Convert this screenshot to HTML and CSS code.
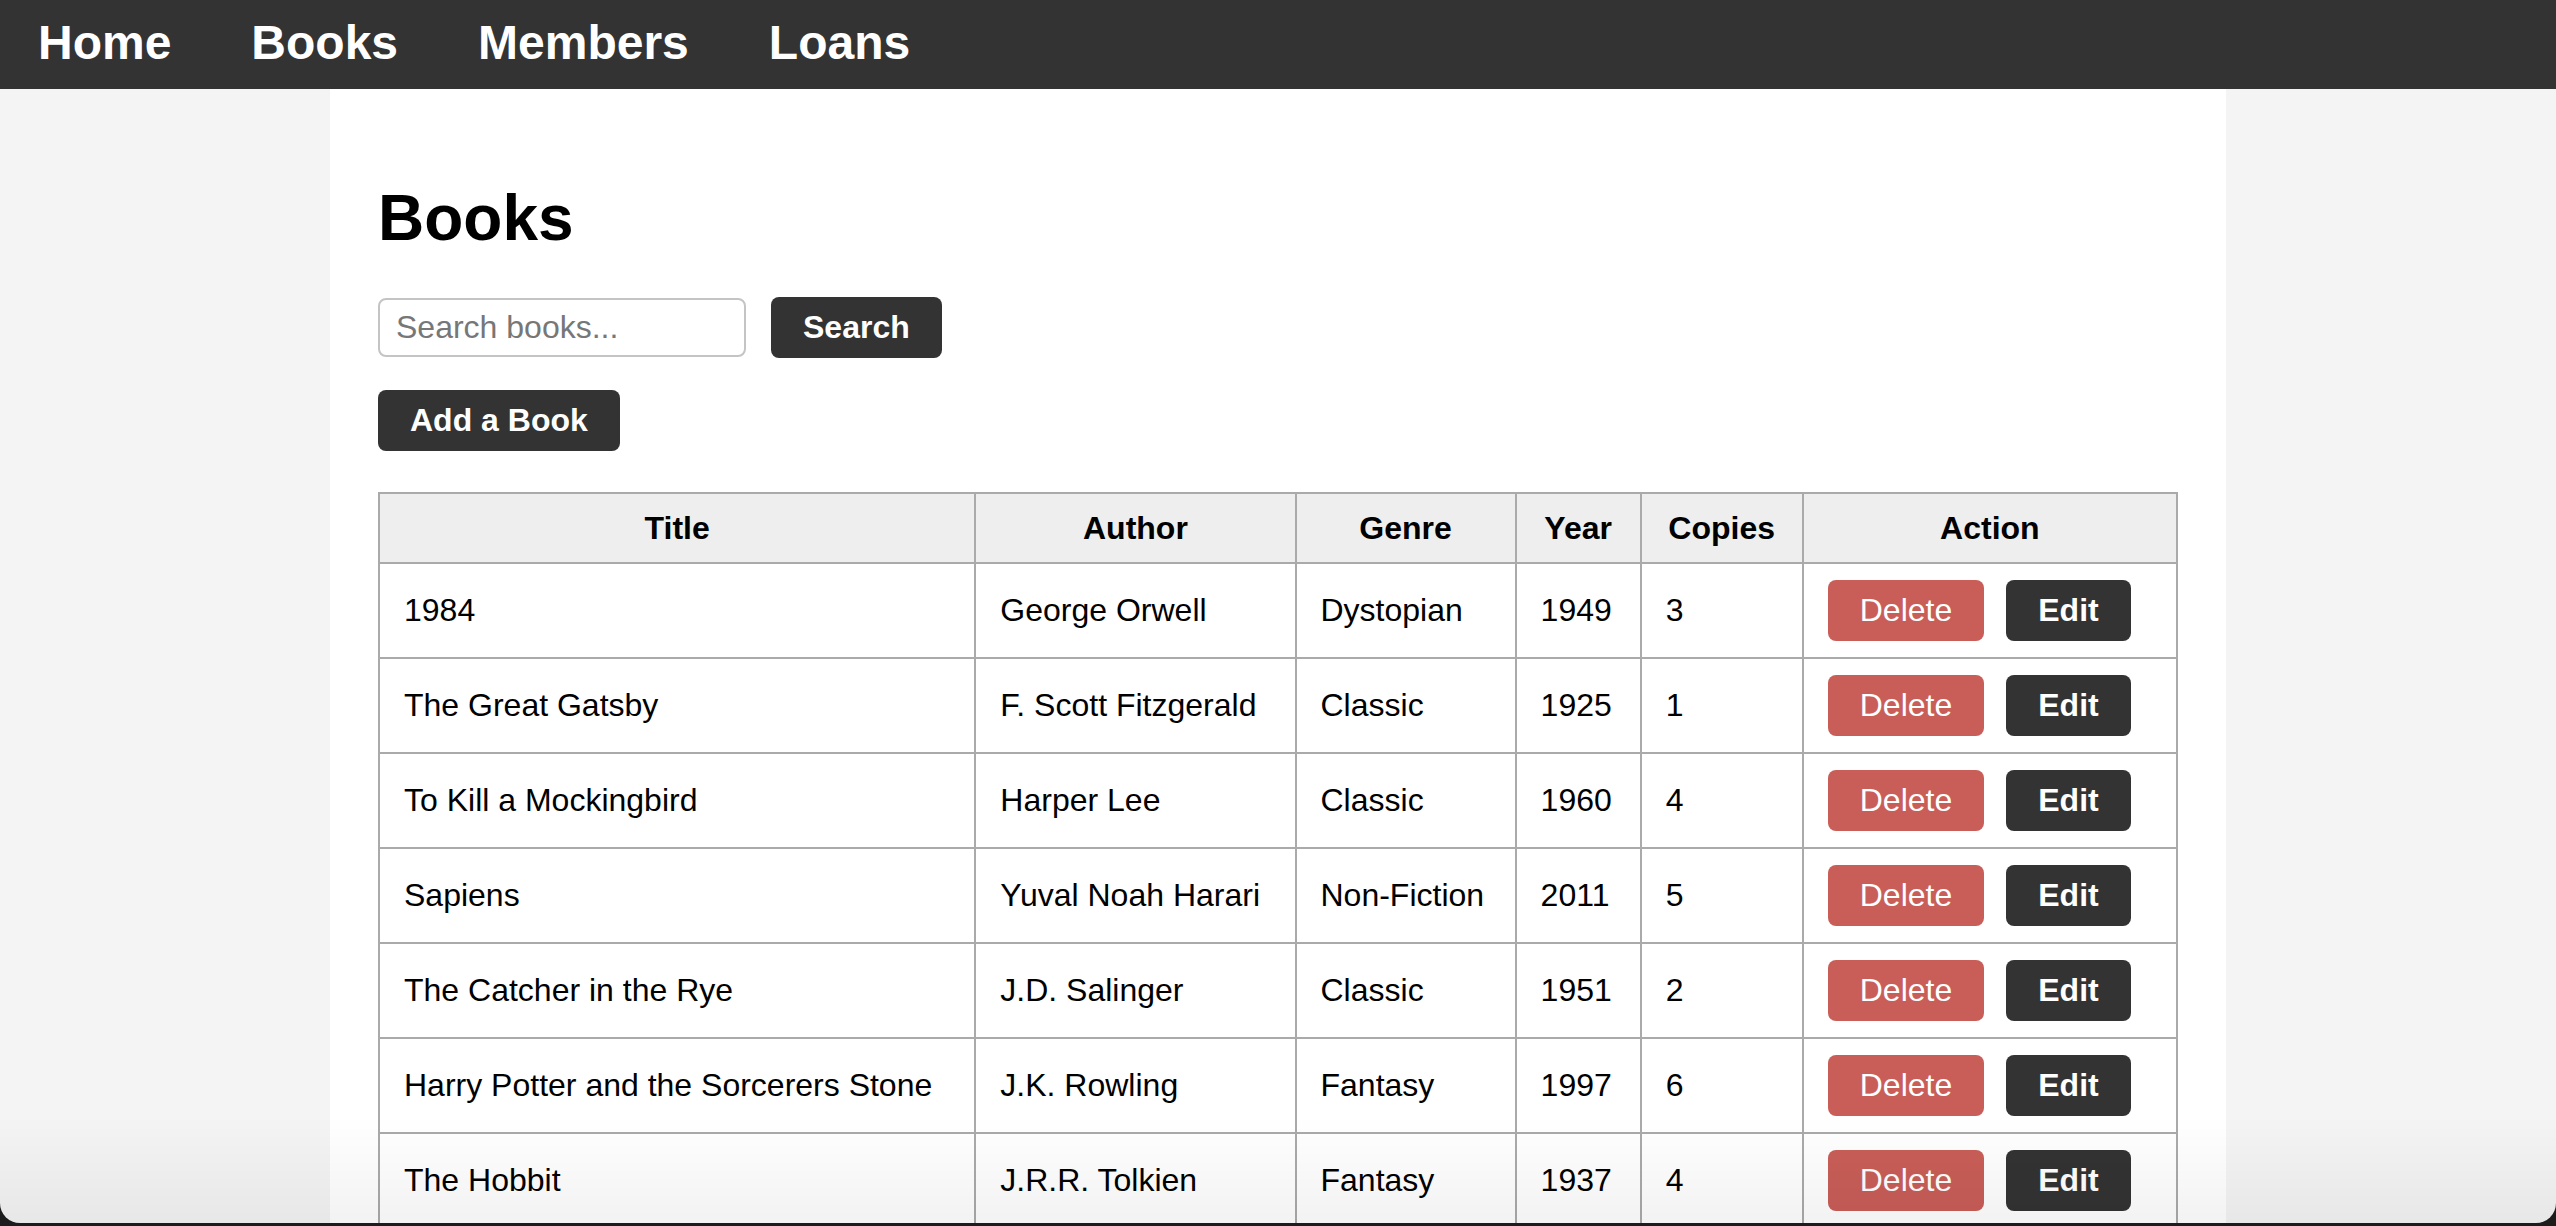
FILE: index.html
```html
<!DOCTYPE html>
<html lang="en">
<head>
<meta charset="utf-8">
<title>Books</title>
<link rel="stylesheet" href="styles.css">
</head>
<body>
<nav class="topnav">
  <a href="#">Home</a>
  <a href="#">Books</a>
  <a href="#">Members</a>
  <a href="#">Loans</a>
</nav>
<main class="container">
  <h1 class="title">Books</h1>
  <form class="search-row">
    <input class="search-input" type="text" placeholder="Search books...">
    <button class="btn" type="button">Search</button>
  </form>
  <div class="add-row"><button class="btn" type="button">Add a Book</button></div>
  <table class="books">
    <colgroup>
      <col class="c-title"><col class="c-author"><col class="c-genre"><col class="c-year"><col class="c-copies"><col class="c-action">
    </colgroup>
    <thead>
      <tr><th>Title</th><th>Author</th><th>Genre</th><th>Year</th><th>Copies</th><th>Action</th></tr>
    </thead>
    <tbody>
      <tr><td>1984</td><td>George Orwell</td><td>Dystopian</td><td>1949</td><td>3</td><td><button class="btn btn-delete" type="button">Delete</button><button class="btn btn-edit" type="button">Edit</button></td></tr>
      <tr><td>The Great Gatsby</td><td>F. Scott Fitzgerald</td><td>Classic</td><td>1925</td><td>1</td><td><button class="btn btn-delete" type="button">Delete</button><button class="btn btn-edit" type="button">Edit</button></td></tr>
      <tr><td>To Kill a Mockingbird</td><td>Harper Lee</td><td>Classic</td><td>1960</td><td>4</td><td><button class="btn btn-delete" type="button">Delete</button><button class="btn btn-edit" type="button">Edit</button></td></tr>
      <tr><td>Sapiens</td><td>Yuval Noah Harari</td><td>Non-Fiction</td><td>2011</td><td>5</td><td><button class="btn btn-delete" type="button">Delete</button><button class="btn btn-edit" type="button">Edit</button></td></tr>
      <tr><td>The Catcher in the Rye</td><td>J.D. Salinger</td><td>Classic</td><td>1951</td><td>2</td><td><button class="btn btn-delete" type="button">Delete</button><button class="btn btn-edit" type="button">Edit</button></td></tr>
      <tr><td>Harry Potter and the Sorcerers Stone</td><td>J.K. Rowling</td><td>Fantasy</td><td>1997</td><td>6</td><td><button class="btn btn-delete" type="button">Delete</button><button class="btn btn-edit" type="button">Edit</button></td></tr>
      <tr><td>The Hobbit</td><td>J.R.R. Tolkien</td><td>Fantasy</td><td>1937</td><td>4</td><td><button class="btn btn-delete" type="button">Delete</button><button class="btn btn-edit" type="button">Edit</button></td></tr>
    </tbody>
  </table>
</main>
<div class="window-edge" aria-hidden="true"><div class="window-edge-inner"></div></div>
</body>
</html>
```
FILE: styles.css
```css
html, body {
  margin: 0;
  padding: 0;
}
body {
  background: #f4f4f4;
  font-family: "Liberation Sans", Arial, Helvetica, sans-serif;
  color: #000;
}
.topnav {
  display: flex;
  align-items: flex-start;
  gap: 80px;
  height: 89px;
  box-sizing: border-box;
  padding: 15px 0 0 38px;
  background: #333;
}
.topnav a {
  color: #fff;
  text-decoration: none;
  font-weight: bold;
  font-size: 48px;
  line-height: 55px;
}
.container {
  width: 1896px;
  box-sizing: border-box;
  margin: 0 auto;
  padding: 48px 48px 40px;
  background: #fff;
}
.title {
  margin: 44px 0 42px;
  font-size: 64px;
  line-height: 74px;
  font-weight: bold;
}
.search-row {
  display: flex;
  align-items: center;
  gap: 25px;
  margin: 0;
}
.search-input {
  width: 368px;
  height: 59px;
  box-sizing: border-box;
  border: 2px solid #c4c4c4;
  border-radius: 8px;
  padding: 0 16px;
  font-family: "Liberation Sans", Arial, sans-serif;
  font-size: 32px;
  color: #000;
  outline: none;
}
.search-input::placeholder {
  color: #777;
}
.add-row {
  display: flex;
  margin-top: 32px;
}
.btn {
  background: #333;
  color: #fff;
  border: none;
  border-radius: 8px;
  padding: 12px 32px;
  font-family: "Liberation Sans", Arial, sans-serif;
  font-size: 32px;
  line-height: 37px;
  font-weight: bold;
  cursor: pointer;
}
.btn-delete {
  background: #c95e58;
  font-weight: normal;
}
.btn-edit {
  margin-left: 22px;
}
.books {
  width: 100%;
  margin-top: 41px;
  border-collapse: collapse;
  table-layout: fixed;
}
.c-title { width: 596px; }
.c-author { width: 320px; }
.c-genre { width: 220px; }
.c-year { width: 125px; }
.c-copies { width: 162px; }
.c-action { width: 374px; }
.books th,
.books td {
  border: 2px solid #aaa;
  padding: 16px 24px;
  font-size: 32px;
  vertical-align: middle;
  white-space: nowrap;
}
.books th {
  background: #eee;
  font-weight: bold;
  text-align: center;
  line-height: 36px;
}
.books td {
  text-align: left;
  line-height: 37px;
}
.window-edge {
  position: fixed;
  left: 0;
  right: 0;
  bottom: 0;
  height: 110px;
  overflow: hidden;
  pointer-events: none;
  background: linear-gradient(to bottom, rgba(0,0,0,0) 0%, rgba(0,0,0,0.05) 100%);
}
.window-edge-inner {
  position: absolute;
  left: 0;
  right: 0;
  bottom: 3px;
  height: 300px;
  border-radius: 0 0 20px 20px;
  box-shadow: 0 0 0 80px #1c1c1c;
}
```
